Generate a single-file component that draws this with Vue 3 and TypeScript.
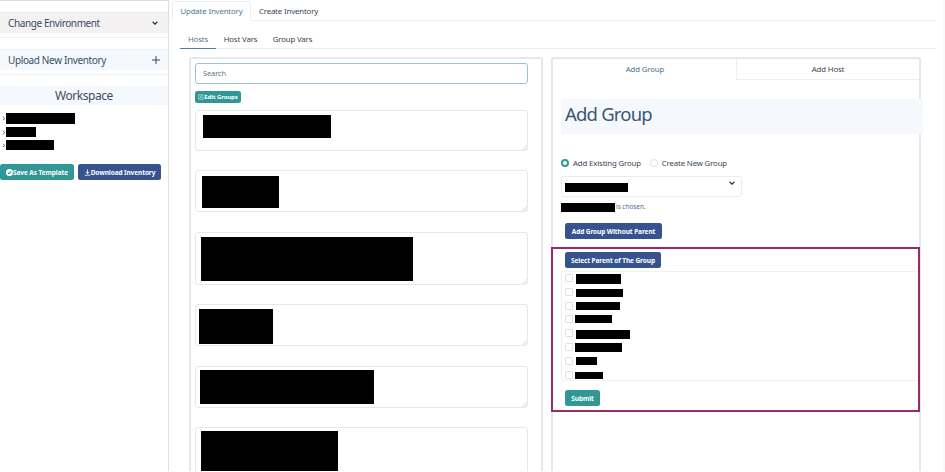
<script setup lang="ts">
import { ref } from 'vue'

interface Bar {
  x: number
  y: number
  w: number
  h: number
}
interface Host extends Bar {
  height: number
}

const files: Bar[] = [
  { x: 6, y: 0, w: 69.4, h: 10.5 },
  { x: 6, y: 0.5, w: 29.5, h: 10 },
  { x: 6, y: 0, w: 48, h: 10 },
]

const hosts: Host[] = [
  { height: 41, x: 7, y: 4.4, w: 128, h: 23 },
  { height: 42, x: 6.3, y: 4.5, w: 76.5, h: 32.5 },
  { height: 53.5, x: 5.4, y: 4.8, w: 211.5, h: 44 },
  { height: 42, x: 3.4, y: 3.5, w: 73.5, h: 35.5 },
  { height: 42, x: 4.4, y: 3.5, w: 173.5, h: 34 },
  { height: 54, x: 5, y: 3, w: 137, h: 50 },
]

const groups: Bar[] = [
  { x: 1, y: 0, w: 44.5, h: 9.5 },
  { x: 1, y: 1, w: 46.5, h: 8 },
  { x: 1, y: 0, w: 43.5, h: 8 },
  { x: 0, y: 0, w: 36.5, h: 8 },
  { x: 0.5, y: 1, w: 54, h: 8.5 },
  { x: 0, y: 0, w: 46.5, h: 9 },
  { x: 1, y: 0, w: 20.5, h: 8.5 },
  { x: 0, y: 1, w: 27.5, h: 7 },
]

const mode = ref<'existing' | 'new'>('existing')

const place = (b: Bar) => ({
  marginLeft: `${b.x}px`,
  marginTop: `${b.y}px`,
  width: `${b.w}px`,
  height: `${b.h}px`,
})
</script>

<template>
  <div class="page">
    <aside class="sidebar">
      <div class="row env">
        <span class="row-label">Change Environment</span>
        <svg class="chev" viewBox="0 0 8 8"><path d="M1.6 2.8 4 5.1 6.4 2.8" /></svg>
      </div>
      <div class="row upload">
        <span class="row-label">Upload New Inventory</span>
        <svg class="plus" viewBox="0 0 10 10"><path d="M5 1v8M1 5h8" /></svg>
      </div>
      <h2 class="workspace"><span>Workspace</span></h2>
      <div class="tree">
        <div v-for="(f, i) in files" :key="i" class="tree-item">
          <svg class="caret" viewBox="0 0 5 8"><path d="M1 1.8 3.6 4 1 6.2" /></svg>
          <i class="bar" :style="place({ ...f, x: f.x - 6 })"></i>
        </div>
      </div>
      <div class="actions">
        <button class="btn teal save">
          <svg class="ic" viewBox="0 0 16 16"><circle cx="8" cy="8" r="8" fill="#fff" /><path d="m4 8.4 2.8 2.8L12 5.6" stroke="#319795" stroke-width="2.3" fill="none" /></svg><span>Save As Template</span>
        </button>
        <button class="btn blue download">
          <svg class="ic" viewBox="0 0 16 16"><path d="M8 1v9M4 6.5 8 10.5l4-4M1.5 14h13" stroke="#fff" stroke-width="2" fill="none" /></svg><span>Download Inventory</span>
        </button>
      </div>
    </aside>

    <main class="main">
      <nav class="tabs">
        <a class="tab active"><span>Update Inventory</span></a>
        <a class="tab"><span>Create Inventory</span></a>
      </nav>
      <nav class="subtabs">
        <a class="sub active">Hosts</a>
        <a class="sub vars">Host Vars</a>
        <a class="sub gvars">Group Vars</a>
      </nav>

      <div class="columns">
        <section class="panel hosts">
          <div class="search">Search</div>
          <button class="btn teal edit">
            <svg class="ic" viewBox="0 0 16 16"><path d="M9 2H2v12h12V8M6 10l.7-3L13 1l2 2-6 6z" stroke="#fff" stroke-width="1.4" fill="none" /></svg><span>Edit Groups</span>
          </button>
          <div class="host-list">
            <div v-for="(h, i) in hosts" :key="i" class="host" :style="{ height: `${h.height}px` }">
              <i class="bar" :style="place(h)"></i>
              <svg class="grip" viewBox="0 0 6 6"><path d="M0 6 6 0M3 6l3-3" /></svg>
            </div>
          </div>
        </section>

        <section class="panel group">
          <nav class="gtabs">
            <a class="gtab active"><span>Add Group</span></a>
            <a class="gtab"><span>Add Host</span></a>
          </nav>
          <h1 class="title"><span>Add Group</span></h1>
          <div class="radios">
            <label @click="mode = 'existing'"><i class="radio" :class="{ on: mode === 'existing' }"></i><span>Add Existing Group</span></label>
            <label @click="mode = 'new'"><i class="radio" :class="{ on: mode === 'new' }"></i><span>Create New Group</span></label>
          </div>
          <div class="select">
            <i class="bar select-bar"></i>
            <svg class="chev" viewBox="0 0 8 8"><path d="M1.6 2.8 4 5.1 6.4 2.8" /></svg>
          </div>
          <p class="chosen"><i class="bar chosen-bar"></i><span>is chosen.</span></p>
          <button class="btn blue without"><span>Add Group Without Parent</span></button>
          <div class="highlight">
            <button class="btn blue parent"><span>Select Parent of The Group</span></button>
            <div class="checks">
              <div v-for="(g, i) in groups" :key="i" class="check">
                <i class="box"></i>
                <i class="bar" :style="place(g)"></i>
              </div>
            </div>
            <button class="btn teal submit"><span>Submit</span></button>
          </div>
        </section>
      </div>
    </main>
  </div>
</template>

<style>
body {
  background: #fff;
  overflow: hidden;
}
</style>

<style scoped>
* {
  box-sizing: border-box;
}
.page {
  display: flex;
  width: 945px;
  height: 471px;
  overflow: hidden;
  font-family: 'Noto Sans', 'Open Sans', sans-serif;
  font-size: 7.8px;
  letter-spacing: -0.14px;
  color: #3a4350;
  white-space: nowrap;
}
.bar {
  display: block;
  flex: none;
  background: #000;
}
.sidebar {
  flex: none;
  width: 169px;
  border-right: 1px solid #dcdfe1;
  border-top: 1px solid #dcdcdc;
  padding-top: 11px;
}
.row {
  display: flex;
  align-items: center;
  justify-content: space-between;
  padding: 0 8px;
  position: relative;
  color: #3b4d61;
}
.row::after {
  content: '';
  position: absolute;
  left: 0;
  right: 0;
  bottom: -5px;
  height: 1px;
  background: #f0f1f3;
}
.env {
  height: 21px;
  background: #f3f1f1;
  border-top: 1px solid #ebe9e9;
}
.upload {
  height: 21px;
  margin-top: 16px;
  background: #f5f9fe;
  border-top: 1px solid #e9eef3;
}
.row-label {
  font-size: 10px;
  letter-spacing: -0.4px;
}
.upload .row-label {
  letter-spacing: -0.37px;
}
.chev {
  width: 8px;
  height: 8px;
}
.env .chev {
  margin-right: 1px;
}
.chev path {
  fill: none;
  stroke: #25303c;
  stroke-width: 1.2;
}
.plus {
  width: 10px;
  height: 10px;
  margin-right: -1px;
}
.plus path {
  stroke: #33465b;
  stroke-width: 1;
}
.workspace {
  margin: 16px 0 0;
  height: 19px;
  line-height: 19px;
  background: #f5f9fe;
  text-align: center;
  font-weight: 400;
  font-size: 12px;
  letter-spacing: -0.45px;
  color: #3b4d61;
}
.tree {
  padding: 8px 0 0 2px;
  height: 59px;
}
.tree-item {
  display: flex;
  height: 13.7px;
}
.caret {
  width: 4px;
  height: 7px;
  margin-top: 2px;
}
.caret path {
  fill: none;
  stroke: #3d6c97;
  stroke-width: 1.1;
}
.actions {
  display: flex;
  gap: 4px;
}
.btn {
  display: flex;
  align-items: center;
  justify-content: center;
  padding: 0;
  height: 16px;
  border: 0;
  border-radius: 2.5px;
  color: #fff;
  font-family: inherit;
  font-weight: 700;
  font-size: 6.5px;
  letter-spacing: -0.09px;
  white-space: nowrap;
}
.teal {
  background: #319795;
}
.blue {
  background: #37538f;
}
.ic {
  width: 7px;
  height: 7px;
  flex: none;
}
.save {
  width: 74px;
}
.download {
  width: 83px;
}
.main {
  flex: 1;
  min-width: 0;
  padding: 1px 7px 0 3px;
  border-right: 2px solid #f9f9fa;
}
.tabs {
  display: flex;
  height: 20px;
  border-bottom: 1px solid #eceef1;
}
.tab {
  display: flex;
  align-items: center;
  justify-content: center;
  height: 20px;
  width: 75px;
}
.tab.active {
  width: 79px;
  border: 1px solid #eceef1;
  border-bottom-color: #fff;
  border-radius: 3px 3px 0 0;
  color: #4e7795;
}
.subtabs {
  display: flex;
  height: 20px;
  margin: 8px 0 0 8px;
  border-bottom: 1px solid #eceef1;
}
.sub {
  height: 20px;
  width: 36px;
  line-height: 20px;
  text-align: center;
}
.sub.active {
  color: #4e7795;
  border-bottom: 1px solid #4e7fa5;
}
.vars {
  width: 49px;
}
.gvars {
  width: 55px;
}
.columns {
  display: flex;
  gap: 8px;
  margin: 8px 0 0 17px;
}
.panel {
  flex: none;
  height: 440px;
  border: 2px solid #e3e8ee;
  border-radius: 3px;
}
.hosts {
  width: 354px;
  padding: 4px 13px 0 4px;
}
.search {
  height: 21px;
  line-height: 19px;
  padding-left: 7px;
  border: 1px solid #9cc3d1;
  border-radius: 3px;
  font-size: 7.5px;
  color: #6b7583;
}
.edit {
  width: 46px;
  height: 12px;
  margin-top: 7px;
  font-size: 6px;
}
.edit .ic {
  width: 6px;
  height: 6px;
}
.host-list {
  display: flex;
  flex-direction: column;
  gap: 19.3px;
  margin-top: 7px;
}
.host {
  position: relative;
  flex: none;
  border: 1px solid #e0ebeb;
  border-radius: 3px;
}
.grip {
  position: absolute;
  right: 0;
  bottom: 0;
  width: 5px;
  height: 5px;
}
.grip path {
  stroke: #c5caca;
  stroke-width: 0.8;
}
.group {
  width: 370px;
}
.gtabs {
  display: flex;
}
.gtab {
  flex: 1;
  height: 21px;
  line-height: 20px;
  text-align: center;
  border: 1px solid #edf0f3;
  border-width: 0 0 1px 1px;
}
.gtab.active {
  color: #4e6f8c;
  border-color: transparent;
}
.title {
  position: relative;
  margin: 19px -4px 0 8px;
  padding-left: 4px;
  height: 35px;
  line-height: 29px;
  background: #f5f9fe;
  color: #3b5675;
  font-weight: 400;
  font-size: 18.5px;
  letter-spacing: -0.8px;
}
.radios {
  display: flex;
  gap: 9px;
  margin: 22px 0 0 8px;
  height: 13px;
}
.radios label {
  display: flex;
  align-items: center;
  gap: 4px;
}
.radio {
  width: 8px;
  height: 8px;
  border: 1px solid #dfe3e8;
  border-radius: 50%;
}
.radio.on {
  border: 2.5px solid #319795;
}
.select {
  display: flex;
  justify-content: space-between;
  width: 181px;
  height: 21px;
  margin: 7px 0 0 8px;
  padding: 2px 5px 0 3.4px;
  border: 1px solid #e8ebef;
  border-radius: 3px;
}
.select-bar {
  width: 63px;
  height: 9px;
  margin-top: 4px;
}
.chosen {
  display: flex;
  align-items: center;
  gap: 1px;
  margin: 5px 0 0 8px;
  height: 10px;
  font-size: 6.4px;
  letter-spacing: 0;
  color: #4e6f8c;
}
.chosen span {
  margin-top: -2px;
}
.chosen-bar {
  width: 54px;
  height: 9px;
}
.without {
  width: 97px;
  margin: 11px 0 0 12px;
}
.highlight {
  position: relative;
  width: 369px;
  height: 165px;
  margin: 8px 0 0 -2px;
  padding: 3px 0 0 8px;
  border: 2px solid #952a6d;
}
.parent {
  width: 96px;
  margin-left: 4px;
}
.checks {
  height: 110px;
  margin-top: 3px;
  padding: 2px 0 0 3.4px;
  border: 1px solid #eff1f4;
  border-right: 0;
  border-radius: 3px 0 0 3px;
}
.check {
  display: flex;
  height: 13.8px;
}
.box {
  flex: none;
  width: 8px;
  height: 8px;
  margin: 0 2px 0 0;
  border: 1px solid #dcdfe3;
  border-radius: 1.5px;
}
.submit {
  width: 35px;
  margin: 9px 0 0 4px;
}
</style>
